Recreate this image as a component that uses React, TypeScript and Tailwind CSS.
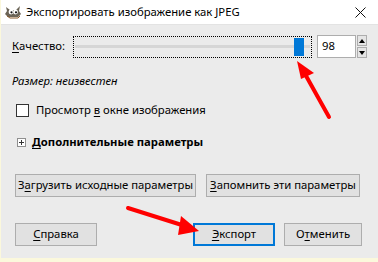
import React from 'react'

const font = { fontFamily: '"Noto Sans", "Open Sans", sans-serif' }

function Btn({
  label,
  u,
  className = '',
  primary = false,
}: {
  label: string
  u: number
  className?: string
  primary?: boolean
}) {
  return (
    <div
      className={`h-[23px] flex items-center justify-center whitespace-nowrap bg-[#e1e1e1] text-[11.3px] text-black ${
        primary ? 'border-2 border-[#0078d7]' : 'border border-[#adadad]'
      } ${className}`}
    >
      <span>
        {label.slice(0, u)}
        <span className="underline underline-offset-2">{label[u]}</span>
        {label.slice(u + 1)}
      </span>
    </div>
  )
}

function GimpIcon() {
  return (
    <svg width="18" height="14" viewBox="0 0 18 14">
      <path d="M2 2 L6 5 L12 5 L16 1 L15 6 L17 9 L14 12 L4 12 L1 9 L3 6 Z" fill="#6b6457" />
      <circle cx="7" cy="7" r="2.4" fill="#fff" />
      <circle cx="11.5" cy="7" r="2.4" fill="#fff" />
      <circle cx="7.5" cy="7.3" r="1.1" fill="#111" />
      <circle cx="12" cy="7.3" r="1.1" fill="#111" />
      <path d="M3 11 L6 13 L14 13 L16 11" stroke="#8a5a2b" strokeWidth="1" fill="none" />
    </svg>
  )
}

export default function App() {
  return (
    <div className="w-[378px] h-[262px] bg-[#fbf8dc] pl-[1px] pb-[4px] relative overflow-hidden" style={font}>
      <div className="w-[377px] h-[258px] flex flex-col bg-[#ebebeb]">
        {/* title bar */}
        <div className="h-[25px] bg-white flex items-center pl-[3px] pr-[12px] border-b border-[#e3e3e3]">
          <GimpIcon />
          <span className="ml-[4px] text-[11.3px] text-black whitespace-nowrap">Экспортировать изображение как JPEG</span>
          <svg className="ml-auto" width="11" height="11" viewBox="0 0 11 11">
            <path d="M0.5 0.5 L10.5 10.5 M10.5 0.5 L0.5 10.5" stroke="#111" strokeWidth="1" />
          </svg>
        </div>

        <div className="flex flex-col pl-[11px] pt-[10px] text-[11.3px]">
          {/* quality */}
          <div className="flex items-center h-[23px]">
            <span className="w-[61px] whitespace-nowrap">
              <span className="underline underline-offset-2">К</span>ачество:
            </span>
            <div className="w-[239px] h-[22px] border border-dotted border-black flex items-center px-[1px] relative">
              <div className="flex-1 h-[3px] bg-[#d6d6d6]" />
              <div className="absolute left-[220px] top-[1px] w-[10px] h-[18px] bg-[#0078d7]" />
            </div>
            <div className="ml-[5px] w-[39px] h-[23px] bg-white border border-[#adadad] flex items-center pl-[4px]">
              98
            </div>
            <div className="ml-[1px] flex flex-col gap-[1px]">
              <div className="w-[10px] h-[11px] border border-[#adadad] bg-[#e5e5e5] flex items-center justify-center">
                <svg width="6" height="4" viewBox="0 0 6 4"><path d="M0 4 L3 0 L6 4 Z" fill="#000" /></svg>
              </div>
              <div className="w-[10px] h-[11px] border border-[#adadad] bg-[#e5e5e5] flex items-center justify-center">
                <svg width="6" height="4" viewBox="0 0 6 4"><path d="M0 0 L6 0 L3 4 Z" fill="#000" /></svg>
              </div>
            </div>
          </div>

          <div className="mt-[15px] italic">Размер: неизвестен</div>

          {/* checkbox */}
          <div className="mt-[12px] flex items-center pl-[4px]">
            <div className="w-[13px] h-[13px] bg-white border border-[#333]" />
            <span className="ml-[7px] whitespace-nowrap">
              Просмотр <span className="underline underline-offset-2">в</span> окне изображения
            </span>
          </div>

          {/* expander */}
          <div className="mt-[15px] flex items-center pl-[5px]">
            <div className="w-[9px] h-[9px] border border-[#8f8f8f] bg-white flex items-center justify-center">
              <svg width="5" height="5" viewBox="0 0 5 5"><path d="M0 2.5 H5 M2.5 0 V5" stroke="#333" strokeWidth="1" /></svg>
            </div>
            <span className="ml-[6px] font-bold whitespace-nowrap">
              <span className="underline underline-offset-2">Д</span>ополнительные параметры
            </span>
          </div>

          {/* preset buttons */}
          <div className="mt-[23px] flex gap-[10px] pl-[3px]">
            <Btn label="Загрузить исходные параметры" u={1} className="w-[181px]" />
            <Btn label="Запомнить эти параметры" u={0} className="w-[154px]" />
          </div>

          {/* dialog buttons */}
          <div className="mt-[26px] flex pl-[3px]">
            <Btn label="Справка" u={0} className="w-[82px]" />
            <Btn label="Экспорт" u={0} primary className="w-[82px] ml-[96px]" />
            <Btn label="Отменить" u={1} className="w-[78px] ml-[9px]" />
          </div>
        </div>
      </div>

      {/* red annotation arrows */}
      <svg className="absolute left-0 top-0 pointer-events-none" width="378" height="262" viewBox="0 0 378 262">
        <line x1="329" y1="117" x2="305" y2="74" stroke="#ff0000" strokeWidth="4" strokeLinecap="round" />
        <path d="M297 61 L314 73 L301 79 Z" fill="#ff0000" />
        <line x1="128" y1="208" x2="185" y2="226" stroke="#ff0000" strokeWidth="4" strokeLinecap="round" />
        <path d="M199 231 L181 216 L178 235 Z" fill="#ff0000" />
      </svg>
    </div>
  )
}
